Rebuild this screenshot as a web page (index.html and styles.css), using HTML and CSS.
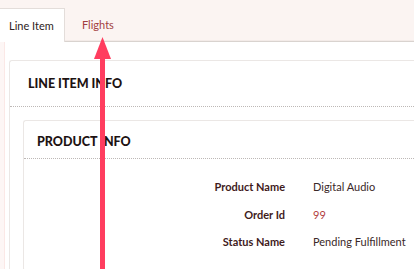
FILE: index.html
```html
<!DOCTYPE html>
<html>
<head>
<meta charset="utf-8">
<link rel="stylesheet" href="styles.css">
</head>
<body>
<div class="page">
  <nav class="tabs">
    <div class="tab active">Line Item</div>
    <div class="tab">Flights</div>
  </nav>
  <div class="content">
    <div class="strip"></div>
    <main class="main">
      <section class="card outer">
        <header class="card-head outer-head">LINE ITEM INFO</header>
        <div class="card-body">
          <section class="card inner">
            <header class="card-head inner-head">PRODUCT INFO</header>
            <dl class="rows">
              <dt>Product Name</dt><dd>Digital Audio</dd>
              <dt>Order Id</dt><dd class="link">99</dd>
              <dt>Status Name</dt><dd>Pending Fulfillment</dd>
            </dl>
          </section>
        </div>
      </section>
    </main>
  </div>
  <svg class="arrow" width="20" height="240" viewBox="0 0 20 240">
    <rect x="8" y="18" width="5" height="230" fill="#ff3d5f"/>
    <polygon points="10.5,0 19,22 2,22" fill="#ff3d5f"/>
  </svg>
</div>
</body>
</html>
```
FILE: styles.css
```css
* { box-sizing: border-box; }
html, body { margin: 0; padding: 0; }
body {
  font-family: Lato, "Liberation Sans", sans-serif;
  background: #fff;
  width: 414px;
  height: 269px;
  overflow: hidden;
}
.page { position: relative; width: 414px; height: 269px; overflow: hidden; }
.tabs {
  display: flex;
  align-items: flex-end;
  height: 42px;
  background: #fbf4f2;
  border-bottom: 1px solid #d9d3cf;
  box-shadow: 0 -1px 0 #f3ebe8 inset;
}
.tab {
  height: 34px;
  display: flex;
  align-items: center;
  font-size: 11px;
  color: #a2403f;
  padding: 0 16px 0 17px;
}
.tab.active {
  width: 66px;
  margin-left: -1px;
  margin-bottom: -1px;
  height: 34px;
  padding: 0 0 0 9px;
  background: #fff;
  border: 1px solid #e3ddda;
  border-bottom: none;
  color: #2e2222;
}
.content { display: flex; height: 227px; }
.strip {
  width: 9px;
  flex: none;
  background: linear-gradient(to right, #fdf6f5 0, #fdf6f5 4px, #fbe8e6 4px, #fbe8e6 5px, #fff 5px);
}
.main { flex: 1; padding-top: 18px; }
.card {
  background: #fff;
  border: 1px solid #ebe7e5;
  border-right: none;
  border-radius: 3px 0 0 3px;
  margin-right: -30px;
}
.card-head {
  font-weight: 900;
  font-size: 12.5px;
  color: #1d1212;
  border-bottom: 1px dotted #bdb8b6;
  display: flex;
  align-items: center;
}
.outer-head { height: 46px; padding-left: 18px; }
.card-body { padding: 13px 0 0 13px; }
.inner-head { height: 38px; padding-left: 13px; padding-top: 3px; }
.rows {
  margin: 0;
  padding: 14px 0 14px 0;
  display: grid;
  grid-template-columns: 261px 1fr;
  column-gap: 28px;
  grid-auto-rows: 27.5px;
  align-items: center;
  font-size: 11px;
}
.rows dt {
  text-align: right;
  font-weight: 700;
  color: #3f1b1c;
}
.rows dd { margin: 0; color: #3a2828; }
.rows dd.link { color: #b2403e; }
.arrow { position: absolute; left: 92px; top: 37px; }
```
